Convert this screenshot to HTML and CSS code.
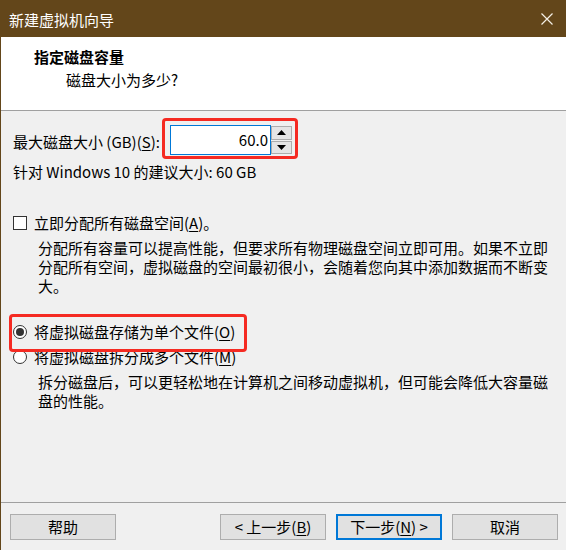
FILE: index.html
```html
<!DOCTYPE html>
<html lang="zh-CN">
<head>
<meta charset="utf-8">
<title>新建虚拟机向导</title>
<link rel="stylesheet" href="styles.css">
</head>
<body>
<div class="window">
  <div class="titlebar">
    <span class="title">新建虚拟机向导</span>
    <svg class="close" width="12" height="12" viewBox="0 0 12 12"><path d="M0.5 0.5 L11.5 11.5 M11.5 0.5 L0.5 11.5" stroke="#f4efe6" stroke-width="1.2" fill="none"/></svg>
  </div>
  <div class="header">
    <div class="heading">指定磁盘容量</div>
    <div class="subheading">磁盘大小为多少?</div>
  </div>
  <div class="content">
    <div class="size-row">
      <span class="label">最大磁盘大小 (GB)(<u>S</u>):</span>
      <div class="spin">
        <div class="spin-input">60.0</div>
        <div class="spin-buttons">
          <div class="spin-btn"><svg width="9" height="5" viewBox="0 0 9 5"><path d="M4.5 0 L9 5 L0 5 Z" fill="#000"/></svg></div>
          <div class="spin-btn"><svg width="9" height="5" viewBox="0 0 9 5"><path d="M0 0 L9 0 L4.5 5 Z" fill="#000"/></svg></div>
        </div>
        <span class="highlight hl-spin"></span>
      </div>
    </div>
    <div class="recommend">针对 Windows 10 的建议大小: 60 GB</div>

    <div class="option check-row">
      <span class="checkbox"></span>
      <span class="opt-label">立即分配所有磁盘空间(<u>A</u>)。</span>
    </div>
    <p class="desc">分配所有容量可以提高性能，但要求所有物理磁盘空间立即可用。如果不立即分配所有空间，虚拟磁盘的空间最初很小，会随着您向其中添加数据而不断变大。</p>

    <div class="option radio-row first-radio">
      <span class="radio checked"></span>
      <span class="opt-label">将虚拟磁盘存储为单个文件(<u>O</u>)</span>
      <span class="highlight hl-radio"></span>
    </div>
    <div class="option radio-row second-radio">
      <span class="radio"></span>
      <span class="opt-label">将虚拟磁盘拆分成多个文件(<u>M</u>)</span>
    </div>
    <p class="desc">拆分磁盘后，可以更轻松地在计算机之间移动虚拟机，但可能会降低大容量磁盘的性能。</p>
  </div>
  <div class="footer">
    <button class="btn">帮助</button>
    <span class="spacer"></span>
    <button class="btn">&lt; 上一步(<u>B</u>)</button>
    <button class="btn btn-default">下一步(<u>N</u>) &gt;</button>
    <button class="btn">取消</button>
  </div>
</div>
</body>
</html>
```

FILE: styles.css
```css
* { box-sizing: border-box; }
html, body { margin: 0; padding: 0; }
body {
  width: 566px;
  height: 550px;
  overflow: hidden;
  font-family: "Noto Sans CJK SC", "Noto Sans", sans-serif;
  font-size: 15px;
  color: #000;
  background: #f0f0f0;
}
.window {
  width: 566px;
  height: 550px;
  display: flex;
  flex-direction: column;
  border-left: 1px solid #63461a;
  background: #f0f0f0;
}
.titlebar {
  height: 37px;
  flex: none;
  background: #63461a;
  display: flex;
  align-items: center;
  justify-content: space-between;
  padding: 0 13px 0 9px;
  margin-left: -1px;
}
.title {
  color: #ffffff;
  font-size: 15px;
  line-height: 20px;
  margin-top: 3px;
}
.close { display: block; margin-top: 1px; }
.header {
  height: 74px;
  flex: none;
  background: #ffffff;
  border-bottom: 1px solid #a0a0a0;
  padding: 10px 0 0 33px;
}
.heading {
  font-weight: bold;
  font-size: 15px;
  line-height: 20px;
}
.subheading {
  line-height: 20px;
  margin: 3px 0 0 32px;
}
.content {
  flex: 1;
  padding: 14px 0 0 12px;
}
.size-row {
  display: flex;
  align-items: center;
  height: 30px;
}
.label { line-height: 20px; width: 157px; margin-top: 3px; }
.spin {
  position: relative;
  display: flex;
  height: 30px;
}
.spin-input {
  width: 101px;
  height: 30px;
  background: #fff;
  border: 1px solid #0078d7;
  text-align: right;
  padding-right: 2px;
  line-height: 27px;
  font-size: 15px;
}
.spin-buttons {
  display: flex;
  flex-direction: column;
  justify-content: center;
  gap: 1px;
  width: 21px;
  height: 30px;
  padding: 1px 0;
}
.spin-btn {
  flex: 1;
  background: #e5e5e5;
  border: 1px solid #adadad;
  display: flex;
  align-items: center;
  justify-content: center;
}
.spin-btn svg { display: block; }
.highlight {
  position: absolute;
  border: 3px solid #f52a22;
  border-radius: 4px;
  pointer-events: none;
}
.hl-spin { left: -8px; top: -7px; width: 136px; height: 41px; }
.recommend {
  line-height: 20px;
  margin-top: 7px;
}
.option {
  display: flex;
  align-items: center;
  height: 20px;
  line-height: 20px;
  position: relative;
}
.check-row { margin-top: 31px; }
.checkbox {
  width: 14px;
  height: 14px;
  border: 1px solid #333;
  background: #fff;
  margin-right: 7px;
  flex: none;
}
.desc {
  margin: 5px 0 0 25px;
  width: 512px;
  line-height: 19px;
}
.first-radio { margin-top: 27px; }
.second-radio { margin-top: 5px; }
.radio {
  width: 14px;
  height: 14px;
  border: 1px solid #333;
  border-radius: 50%;
  background: #fff;
  margin-right: 7px;
  flex: none;
  display: flex;
  align-items: center;
  justify-content: center;
}
.radio.checked::after {
  content: "";
  width: 8px;
  height: 8px;
  border-radius: 50%;
  background: #333;
}
.hl-radio { left: -4px; top: -8px; width: 238px; height: 38px; z-index: 1; }
.second-radio .opt-label, .second-radio .radio { position: relative; z-index: 0; }
.footer {
  flex: none;
  height: 48px;
  border-top: 1px solid #a0a0a0;
  display: flex;
  align-items: flex-start;
  padding: 11px 8px 0 9px;
  gap: 10px;
}
.spacer { flex: 1; }
.btn {
  width: 106px;
  height: 26px;
  background: #e1e1e1;
  border: 1px solid #adadad;
  font-family: "Noto Sans CJK SC", "Noto Sans", sans-serif;
  font-size: 15px;
  line-height: 22px;
  padding: 0;
  color: #000;
}
.btn-default { border: 2px solid #0078d7; }
u { text-underline-offset: 2px; }
.desc + .first-radio { }
```
